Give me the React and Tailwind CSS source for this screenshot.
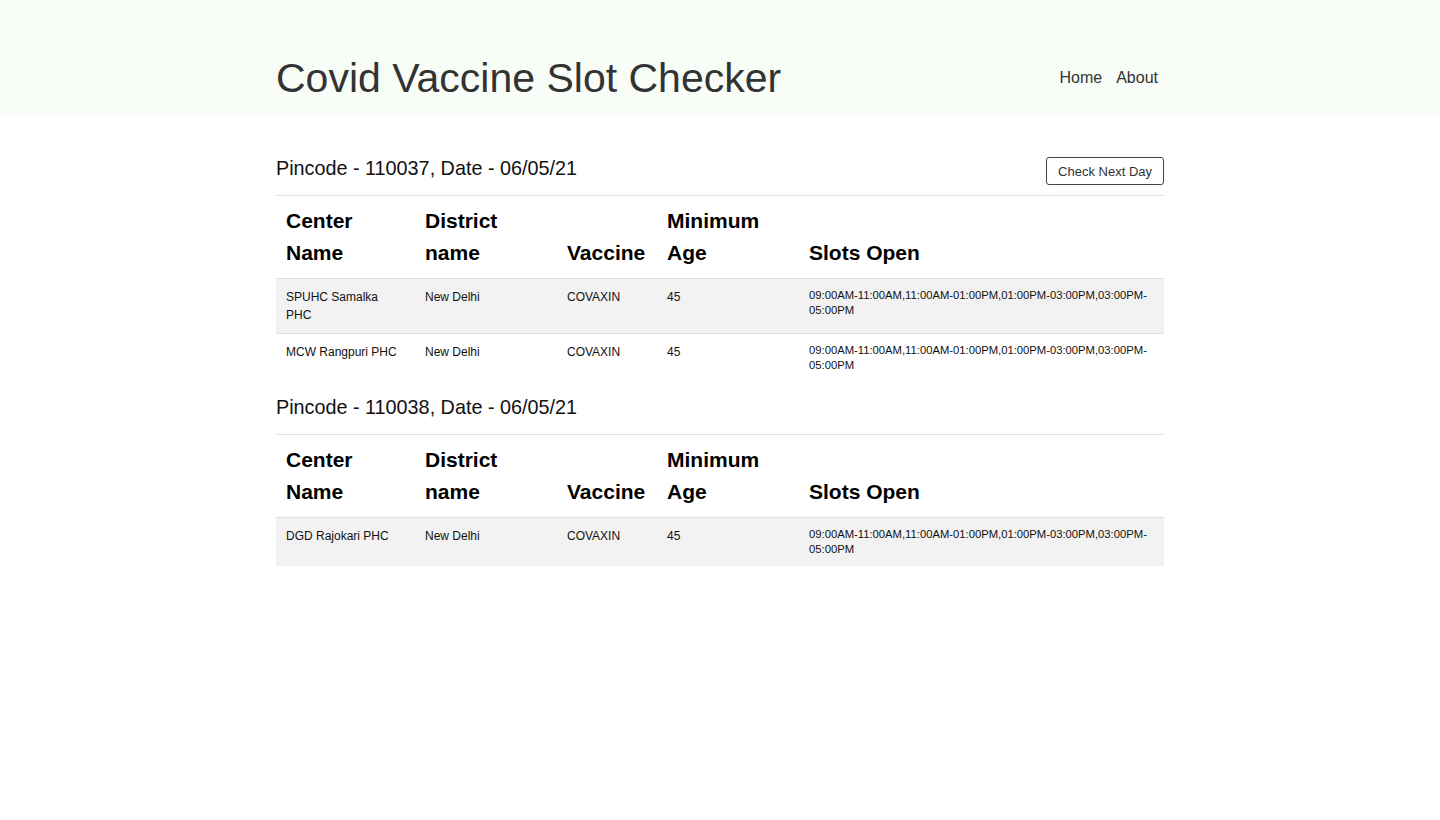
import React from "react";

const slots = "09:00AM-11:00AM,11:00AM-01:00PM,01:00PM-03:00PM,03:00PM-05:00PM";

const sections = [
  {
    pin: "110037",
    date: "06/05/21",
    button: true,
    rows: [
      { name: "SPUHC Samalka PHC", district: "New Delhi", vaccine: "COVAXIN", age: "45" },
      { name: "MCW Rangpuri PHC", district: "New Delhi", vaccine: "COVAXIN", age: "45" },
    ],
  },
  {
    pin: "110038",
    date: "06/05/21",
    button: false,
    rows: [{ name: "DGD Rajokari PHC", district: "New Delhi", vaccine: "COVAXIN", age: "45" }],
  },
];

function Section({ s, first }) {
  return (
    <div className={first ? "pt-[40px]" : "pt-[13px]"}>
      <div className="flex items-start justify-between h-[24px] mb-[15px]">
        <h2 className="text-[19.8px] leading-[24px] text-[#111]">
          Pincode - {s.pin}, Date - {s.date}
        </h2>
        {s.button && (
          <button className="mt-[1px] h-[28px] px-[11px] border border-[#444] rounded-[3px] text-[13px] text-[#333] bg-white leading-none">
            Check Next Day
          </button>
        )}
      </div>
      <div className="h-px bg-[#dfe2e5]" />
      <table className="w-full table-fixed border-collapse">
        <colgroup>
          <col className="w-[139px]" />
          <col className="w-[142px]" />
          <col className="w-[100px]" />
          <col className="w-[142px]" />
          <col className="w-[365px]" />
        </colgroup>
        <thead>
          <tr className="border-b border-[#dfe2e5]">
            {["Center Name", "District name", "Vaccine", "Minimum Age", "Slots Open"].map((h) => (
              <th
                key={h}
                className="align-bottom text-left px-[10px] py-[9px] text-[21px] leading-[32px] font-bold text-black"
              >
                {h}
              </th>
            ))}
          </tr>
        </thead>
        <tbody>
          {s.rows.map((r, i) => (
            <tr key={r.name} className={`${i % 2 === 0 ? "bg-[#f2f2f2]" : "bg-white"} ${i > 0 ? "border-t border-[#dfe2e5]" : ""}`}>
              <td className="align-top px-[10px] py-[9px] text-[12px] leading-[18px] text-[#111]">{r.name}</td>
              <td className="align-top px-[10px] py-[9px] text-[12px] leading-[18px] text-[#111]">{r.district}</td>
              <td className="align-top px-[10px] py-[9px] text-[12px] leading-[18px] text-[#111]">{r.vaccine}</td>
              <td className="align-top px-[10px] py-[9px] text-[12px] leading-[18px] text-[#111]">{r.age}</td>
              <td className="align-top px-[10px] py-[9px] text-[11.25px] leading-[15px] text-[#111] break-words">{slots}</td>
            </tr>
          ))}
        </tbody>
      </table>
    </div>
  );
}

export default function App() {
  return (
    <div className="min-h-[820px] bg-white" style={{ fontFamily: '"Liberation Sans", Arial, sans-serif' }}>
      <header className="h-[116px] bg-[#f8fdf7]">
        <div className="w-[888px] mx-auto pt-[54px] flex items-center justify-between">
          <h1 className="text-[41px] leading-[48px] text-[#333] font-normal">Covid Vaccine Slot Checker</h1>
          <nav className="flex gap-[14px] mr-[6px] text-[16px] text-[#333]">
            <a href="#">Home</a>
            <a href="#">About</a>
          </nav>
        </div>
      </header>
      <main className="w-[888px] mx-auto">
        {sections.map((s, i) => (
          <Section key={s.pin} s={s} first={i === 0} />
        ))}
      </main>
    </div>
  );
}
